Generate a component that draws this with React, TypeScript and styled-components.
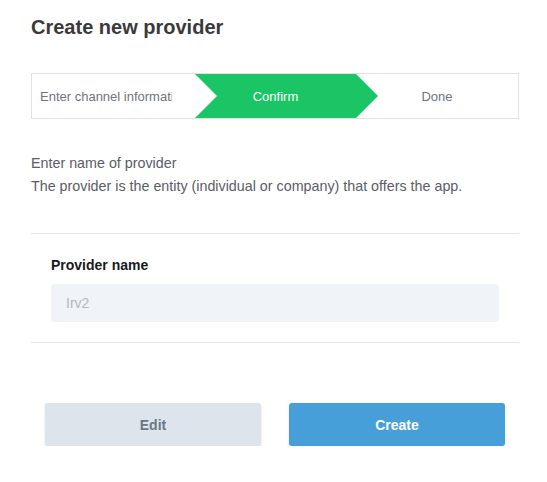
import React from "react";
import styled, { createGlobalStyle } from "styled-components";

const GlobalStyle = createGlobalStyle`
  body {
    margin: 0;
    background: #ffffff;
    font-family: "Liberation Sans", Arial, sans-serif;
  }
`;

const Page = styled.div`
  width: 488px;
  padding: 14px 0 0 31px;
`;

const Title = styled.h1`
  margin: 0;
  font-size: 20px;
  line-height: 26px;
  font-weight: bold;
  color: #3a3a3a;
`;

const Steps = styled.div`
  margin-top: 33px;
  display: grid;
  grid-template-columns: 163px 161px 1fr;
  height: 46px;
  box-sizing: border-box;
  border: 1px solid #dfe2ea;
  overflow: hidden;
`;

const Step = styled.div<{ active?: boolean; first?: boolean }>`
  position: relative;
  display: flex;
  align-items: center;
  justify-content: ${(p) => (p.first ? "flex-start" : "center")};
  padding: ${(p) => (p.first ? "0 22px 0 8px" : "0")};
  font-size: 13px;
  color: ${(p) => (p.active ? "#ffffff" : "#6f7480")};
  background: ${(p) => (p.active ? "#1bc465" : "transparent")};
  white-space: nowrap;
  overflow: visible;
  z-index: ${(p) => (p.first ? 2 : p.active ? 1 : 0)};
`;

const Label = styled.span`
  overflow: hidden;
  display: block;
  max-width: 132px;
`;

const Arrow = styled.svg`
  position: absolute;
  top: 0;
  right: -22px;
  width: 22px;
  height: 44px;
`;

const Desc = styled.p`
  margin: 33px 0 0;
  font-size: 14.3px;
  line-height: 23px;
  color: #5a5d66;
`;

const Section = styled.div`
  margin-top: 35px;
  border-top: 1px solid #e4e6ee;
  border-bottom: 1px solid #e4e6ee;
  padding: 22px 20px 20px;
`;

const FieldLabel = styled.div`
  font-size: 14px;
  line-height: 18px;
  font-weight: bold;
  color: #1a1a1a;
`;

const Input = styled.input`
  margin-top: 10px;
  display: block;
  width: 100%;
  height: 38px;
  box-sizing: border-box;
  border: none;
  border-radius: 4px;
  background: #f0f3f7;
  padding: 0 15px;
  font-family: inherit;
  font-size: 14px;
  color: #333;
  outline: none;
  &::placeholder {
    color: #b3b8c0;
  }
`;

const Buttons = styled.div`
  margin-top: 60px;
  padding: 0 14px;
  display: grid;
  grid-template-columns: 1fr 1fr;
  gap: 28px;
`;

const Button = styled.button<{ primary?: boolean }>`
  height: 43px;
  border: none;
  border-radius: 3px;
  font-family: inherit;
  font-size: 14px;
  font-weight: bold;
  background: ${(p) => (p.primary ? "#469fd8" : "#dee4ec")};
  color: ${(p) => (p.primary ? "#ffffff" : "#6b7785")};
  box-shadow: 0 1px 3px rgba(0, 0, 0, 0.12);
`;

const ArrowShape: React.FC<{ fill: string }> = ({ fill }) => (
  <Arrow viewBox="0 0 22 44" preserveAspectRatio="none">
    <polygon points="0,0 22,22 0,44" fill={fill} />
  </Arrow>
);

export default function App() {
  return (
    <>
      <GlobalStyle />
      <Page>
        <Title>Create new provider</Title>
        <Steps>
          <Step first>
            <Label>Enter channel information</Label>
            <ArrowShape fill="#ffffff" />
          </Step>
          <Step active>
            Confirm
            <ArrowShape fill="#1bc465" />
          </Step>
          <Step>Done</Step>
        </Steps>
        <Desc>
          Enter name of provider
          <br />
          The provider is the entity (individual or company) that offers the app.
        </Desc>
        <Section>
          <FieldLabel>Provider name</FieldLabel>
          <Input placeholder="Irv2" />
        </Section>
        <Buttons>
          <Button>Edit</Button>
          <Button primary>Create</Button>
        </Buttons>
      </Page>
    </>
  );
}
